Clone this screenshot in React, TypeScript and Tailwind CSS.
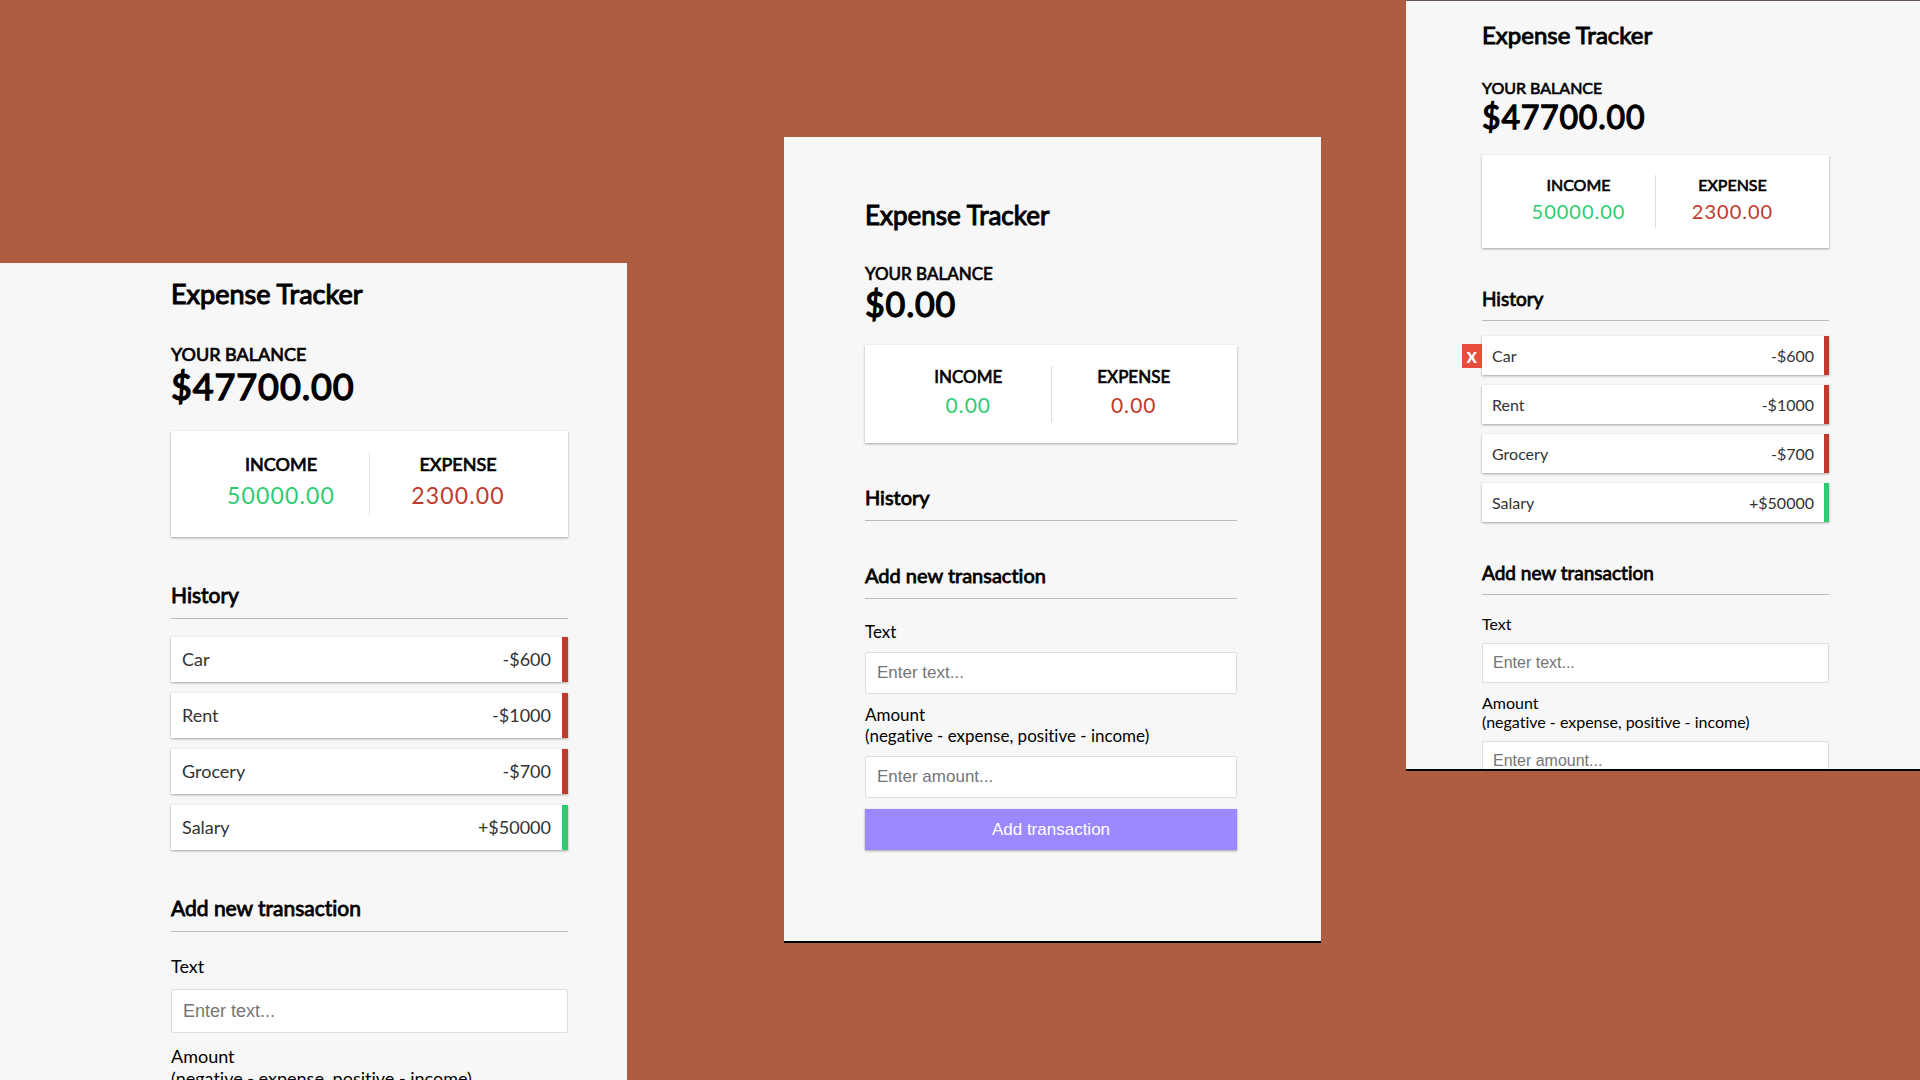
import { useId } from "react";

type Transaction = { text: string; amount: number };

type Size = {
  frame: string;
  title: string;
  label: string;
  balance: string;
  card: string;
  cardLabel: string;
  money: string;
  heading: string;
  list: string;
  item: string;
  form: string;
  field: string;
  fieldGap: string;
  input: string;
  button: string;
};

const large: Size = {
  frame: "col-start-1 mt-[263px] pt-[15px] pl-[171px] pr-[59px] overflow-hidden",
  title: "text-[27px] leading-[32px]",
  label: "mt-[33px] text-[18px] leading-[22px]",
  balance: "text-[36px] leading-[42px]",
  card: "mt-6 p-[22px]",
  cardLabel: "text-[18px] leading-[22px]",
  money: "my-[6px] text-[23px] leading-[28px]",
  heading: "mt-[45px] pb-[10px] text-[21px] leading-[26px]",
  list: "mt-[18px] gap-[11px]",
  item: "px-[11px] py-3 border-r-[6px] text-[18px] leading-[21px]",
  form: "mt-[23px]",
  field: "gap-3 text-[18px] leading-[22px]",
  fieldGap: "mt-3",
  input: "h-[44px] px-[11px] text-[18px]",
  button: "mt-3 h-[44px] text-[18px]",
};

const medium: Size = {
  frame: "col-start-3 mt-[137px] pt-[63px] pb-[91px] pl-[81px] pr-[84px] self-start border-b-2 border-black",
  title: "text-[26px] leading-[30px]",
  label: "mt-[34px] text-[17px] leading-[20px]",
  balance: "text-[34px] leading-[40px]",
  card: "mt-[21px] p-[21px]",
  cardLabel: "text-[17px] leading-[22px]",
  money: "my-1 text-[21px] leading-[26px]",
  heading: "mt-[42px] pb-[11px] text-[20px] leading-[24px]",
  list: "",
  item: "px-[11px] py-[11px] border-r-[5px] text-[17px] leading-[20px]",
  form: "mt-[22px]",
  field: "gap-[10px] text-[17px] leading-[21px]",
  fieldGap: "mt-[10px]",
  input: "h-[42px] px-[11px] text-[17px]",
  button: "mt-[11px] h-[41px] text-[17px]",
};

const small: Size = {
  frame:
    "col-start-5 h-[771px] pt-5 pl-[76px] pr-[91px] self-start overflow-hidden border-t border-t-[#66555c] border-b-2 border-b-black",
  title: "text-[24px] leading-[28px]",
  label: "mt-[29px] text-[16px] leading-[20px]",
  balance: "text-[32px] leading-[38px]",
  card: "mt-[19px] p-5",
  cardLabel: "text-[16px] leading-[19px]",
  money: "my-[5px] text-[20px] leading-[24px]",
  heading: "mt-[39px] pb-[10px] text-[19px] leading-[23px]",
  list: "mt-[15px] gap-[10px]",
  item: "p-[10px] border-r-[5px] text-[16px] leading-[19px]",
  form: "mt-[19px]",
  field: "gap-[10px] text-[16px] leading-[19px]",
  fieldGap: "mt-[10px]",
  input: "h-[40px] px-[10px] text-[16px]",
  button: "mt-[10px] h-[40px] text-[16px]",
};

const history: Transaction[] = [
  { text: "Car", amount: -600 },
  { text: "Rent", amount: -1000 },
  { text: "Grocery", amount: -700 },
  { text: "Salary", amount: 50000 },
];

const strong = "font-normal [-webkit-text-stroke:0.04em_currentColor]";
const raised = "shadow-[0_1px_3px_rgba(0,0,0,0.12),0_1px_2px_rgba(0,0,0,0.24)]";
const inputStyle =
  "w-full rounded-[2px] border border-[#dedede] bg-white font-['Liberation_Sans',Arial,sans-serif] placeholder:text-[#757575] placeholder:opacity-100 outline-none";

function Tracker({
  size,
  items,
  activeIndex = -1,
}: {
  size: Size;
  items: Transaction[];
  activeIndex?: number;
}) {
  const id = useId();
  const income = items.filter((t) => t.amount > 0).reduce((s, t) => s + t.amount, 0);
  const expense = Math.abs(items.filter((t) => t.amount < 0).reduce((s, t) => s + t.amount, 0));

  return (
    <section className={`row-start-1 min-w-0 bg-[#f7f7f7] ${size.frame}`}>
      <h2 className={`${strong} ${size.title}`}>Expense Tracker</h2>

      <h4 className={`${strong} ${size.label}`}>YOUR BALANCE</h4>
      <h1 className={`${strong} tracking-wide ${size.balance}`}>${(income - expense).toFixed(2)}</h1>

      <div className={`flex bg-white text-center ${raised} ${size.card}`}>
        <div className="flex-1 border-r border-[#dedede]">
          <h4 className={`${strong} ${size.cardLabel}`}>INCOME</h4>
          <p className={`tracking-wider text-[#2ecc71] ${size.money}`}>{income.toFixed(2)}</p>
        </div>
        <div className="flex-1">
          <h4 className={`${strong} ${size.cardLabel}`}>EXPENSE</h4>
          <p className={`tracking-wider text-[#c0392b] ${size.money}`}>{expense.toFixed(2)}</p>
        </div>
      </div>

      <h3 className={`border-b border-[#bbb] ${strong} ${size.heading}`}>History</h3>
      <ul className={`flex flex-col ${size.list}`}>
        {items.map((t, i) => (
          <li
            key={t.text}
            className={`relative flex justify-between bg-white text-[#333] ${raised} ${size.item} ${
              t.amount < 0 ? "border-[#c0392b]" : "border-[#2ecc71]"
            }`}
          >
            {t.text}
            <span>
              {t.amount < 0 ? "-" : "+"}${Math.abs(t.amount)}
            </span>
            {i === activeIndex && (
              <button
                type="button"
                aria-label={`Delete ${t.text}`}
                className="absolute top-1/2 right-full h-6 -translate-y-1/2 bg-[#e74c3c] px-[5px] pb-[2px] text-[20px] leading-[22px] font-bold text-white"
              >
                x
              </button>
            )}
          </li>
        ))}
      </ul>

      <h3 className={`border-b border-[#bbb] ${strong} ${size.heading}`}>Add new transaction</h3>
      <form className={size.form} onSubmit={(e) => e.preventDefault()}>
        <div className={`flex flex-col ${size.field}`}>
          <label htmlFor={`${id}-text`}>Text</label>
          <input id={`${id}-text`} type="text" placeholder="Enter text..." className={`${inputStyle} ${size.input}`} />
        </div>
        <div className={`flex flex-col ${size.field} ${size.fieldGap}`}>
          <label htmlFor={`${id}-amount`}>
            Amount
            <br />
            (negative - expense, positive - income)
          </label>
          <input
            id={`${id}-amount`}
            type="number"
            placeholder="Enter amount..."
            className={`${inputStyle} ${size.input}`}
          />
        </div>
        <button
          type="submit"
          className={`block w-full bg-[#9c88ff] font-['Liberation_Sans',Arial,sans-serif] text-white ${raised} ${size.button}`}
        >
          Add transaction
        </button>
      </form>
    </section>
  );
}

export default function App() {
  return (
    <main className="grid h-screen grid-cols-[627fr_157fr_537fr_85fr_514fr] grid-rows-[minmax(0,1fr)] overflow-hidden bg-[#ae5d41] font-['Lato',sans-serif] text-black [font-variant-ligatures:none]">
      <Tracker size={large} items={history} />
      <Tracker size={medium} items={[]} />
      <Tracker size={small} items={history} activeIndex={0} />
    </main>
  );
}
